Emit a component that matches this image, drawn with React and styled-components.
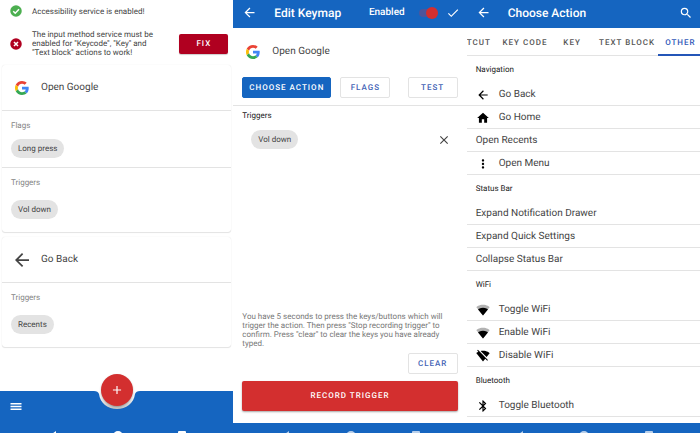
import React from "react";
import styled, { createGlobalStyle } from "styled-components";

const BLUE = "#1565c0";
const RED = "#d32f2f";

const GlobalStyle = createGlobalStyle`
  *, *::before, *::after { box-sizing: border-box; }
  body { margin: 0; background: #fff; color: #444; font-family: Roboto, "Liberation Sans", sans-serif; font-size: 10px; line-height: 12px; text-rendering: geometricPrecision; }
  button { font: inherit; color: inherit; border: 0; background: none; padding: 0; cursor: pointer; text-rendering: inherit; }
  h1, h2, p, ul { margin: 0; padding: 0; font: inherit; }
  ul { list-style: none; }
  svg { display: block; flex: none; }
`;

const Screens = styled.main`
  display: grid;
  grid-template-columns: repeat(3, minmax(0, 1fr));
  height: 100vh;
  overflow: hidden;
`;

const Screen = styled.section`
  display: flex;
  flex-direction: column;
  min-width: 0;
  min-height: 0;
  overflow: hidden;
`;

const Content = styled.div`
  flex: 1;
  min-height: 0;
  overflow: hidden;
  display: flex;
  flex-direction: column;
`;

/* Status notices */
const Notices = styled.div`
  display: flex;
  flex-direction: column;
  gap: 13px;
  padding: 5px 5px 0 10px;
`;

const Notice = styled.div`
  display: flex;
  align-items: center;
  gap: 10px;
`;

const NoticeText = styled.p`
  flex: 1;
  padding-right: 12px;
  font-size: 8px;
  line-height: 9px;
`;

const FixButton = styled.button`
  width: 49px;
  height: 20px;
  border-radius: 2px;
  background: #b00020;
  color: #fff;
  font-size: 8px;
  font-weight: 500;
  letter-spacing: 1px;
  box-shadow: 0 1px 1px rgba(0, 0, 0, 0.2);
`;

/* Keymap cards */
const Cards = styled.div`
  display: flex;
  flex-direction: column;
  gap: 5px;
  padding: 8px 2px 0;
`;

const Card = styled.article`
  border-radius: 3px;
  box-shadow: 0 0 1px rgba(0, 0, 0, 0.14), 0 1px 1px rgba(0, 0, 0, 0.1);
`;

const CardHead = styled.header`
  display: flex;
  align-items: center;
  gap: 12px;
  height: 45px;
  padding: 1px 13px 0;
`;

const CardSection = styled.div`
  display: flex;
  flex-direction: column;
  align-items: flex-start;
  gap: ${(p) => (p.$compact ? 8 : 12)}px;
  padding: 10px 9px ${(p) => (p.$compact ? 9 : 13)}px;
  border-top: 1px solid #e3e3e3;
`;

const Caption = styled.h2`
  font-size: 8px;
  line-height: 10px;
  color: ${(p) => (p.$strong ? "#222" : "#858585")};
`;

const Chip = styled.span`
  display: inline-flex;
  align-items: center;
  height: 19px;
  padding: 0 7px;
  border-radius: 10px;
  background: #e3e3e3;
  color: #444;
  font-size: 8px;
`;

/* Bottom bars */
const BottomBar = styled.footer`
  position: relative;
  display: flex;
  flex-direction: column;
  justify-content: space-between;
  height: 42px;
  background: ${BLUE};
  color: #fff;
`;

const MenuButton = styled.button`
  align-self: flex-start;
  padding: 9px 9px 0;
  color: #fff;
`;

const FabDock = styled.div`
  position: absolute;
  top: -17px;
  left: 0;
  right: 0;
  display: grid;
  justify-items: center;
  pointer-events: none;
  > * { grid-area: 1 / 1; }
`;

const Fab = styled.button`
  width: 32px;
  height: 32px;
  display: grid;
  place-items: center;
  border-radius: 50%;
  background: ${RED};
  color: #fff;
  pointer-events: auto;
  box-shadow: 0 1px 2px rgba(0, 0, 0, 0.3);
`;

const SystemBar = styled.div`
  display: flex;
  justify-content: space-between;
  align-items: flex-start;
  flex: none;
  height: ${(p) => (p.$inset ? 2 : 10)}px;
  padding: ${(p) => (p.$inset ? 0 : 8)}px 46px 0 48px;
  overflow: hidden;
  background: ${BLUE};
  color: ${(p) => (p.$inset ? "#fff" : "#b8cfea")};
`;

/* App bar */
const AppBar = styled.header`
  display: flex;
  align-items: center;
  flex: none;
  height: 28px;
  padding: 0 7px 3px 9px;
  background: ${BLUE};
  color: #fff;
`;

const IconButton = styled.button`
  display: grid;
  place-items: center;
  flex: none;
`;

const Title = styled.h1`
  flex: 1;
  padding-left: 17px;
  font-size: 12px;
  line-height: 14px;
  font-weight: 500;
  white-space: nowrap;
`;

const SwitchLabel = styled.label`
  display: flex;
  align-items: center;
  gap: 14px;
  margin-right: 8px;
  font-weight: 500;
`;

const Switch = styled.input`
  appearance: none;
  display: flex;
  align-items: center;
  justify-content: flex-end;
  width: 19px;
  height: 8px;
  margin: 0;
  border-radius: 4px;
  background: #4c559c;
  &::before {
    content: "";
    width: 12px;
    height: 12px;
    flex: none;
    border-radius: 50%;
    background: ${RED};
  }
`;

/* Keymap editor */
const ActionSummary = styled.div`
  display: flex;
  align-items: center;
  gap: 12px;
  height: 46px;
  padding: 1px 13px 0;
`;

const ButtonRow = styled.div`
  display: flex;
  padding: 3px 9px 7px;
  border-bottom: 1px solid #e3e3e3;
`;

const Button = styled.button`
  width: ${(p) => (p.$filled ? 89 : 50)}px;
  height: 21px;
  margin-left: ${(p) => (p.$end ? "auto" : p.$filled ? "0" : "9px")};
  border: 1px solid ${(p) => (p.$filled ? BLUE : "#e3e3e3")};
  border-radius: 2px;
  background: ${(p) => (p.$filled ? BLUE : "#fff")};
  color: ${(p) => (p.$filled ? "#fff" : "#3f62b5")};
  font-size: 8px;
  font-weight: 500;
  letter-spacing: 1px;
  white-space: nowrap;
`;

const TriggerBlock = styled.div`
  flex: 1;
  padding: 5px 9px;
`;

const TriggerRow = styled.div`
  display: flex;
  align-items: center;
  justify-content: space-between;
  padding: 9px 7px 0 9px;
`;

const RecordPanel = styled.div`
  display: flex;
  flex-direction: column;
  gap: 5px;
  padding: 0 9px 12px;
`;

const Hint = styled.p`
  padding-right: 8px;
  font-size: 8px;
  line-height: 9px;
  color: #777;
`;

const RecordButton = styled.button`
  height: 30px;
  margin-top: 2px;
  border-radius: 2px;
  background: ${RED};
  color: #fff;
  font-size: 8px;
  font-weight: 500;
  letter-spacing: 1px;
  box-shadow: 0 1px 2px rgba(0, 0, 0, 0.35);
`;

/* Action chooser */
const Tabs = styled.div`
  display: flex;
  justify-content: space-between;
  flex: none;
  height: 28px;
  border-bottom: 1px solid #e3e3e3;
`;

const Tab = styled.button`
  min-width: 41px;
  height: 28px;
  padding: 3px 6px 0 7px;
  border-bottom: 2px solid ${(p) => (p.$active ? "#2456b8" : "transparent")};
  color: ${(p) => (p.$active ? "#3158b8" : "#555")};
  font-size: 8px;
  font-weight: 500;
  letter-spacing: 1px;
  white-space: nowrap;
  &:first-child { min-width: 0; padding-left: 0; }
`;

const GroupTitle = styled.h2`
  height: 27px;
  padding: 9px 9px 0;
  font-size: 8px;
  line-height: 10px;
  color: #222;
`;

const ActionRow = styled.button`
  display: flex;
  align-items: center;
  gap: 9px;
  width: 100%;
  height: 23px;
  padding: 2px 9px 0;
  border-bottom: 1px solid #e3e3e3;
  text-align: left;
  svg { color: #000; }
`;

const PATHS = {
  back: "M20 11H7.83l5.59-5.59L12 4l-8 8 8 8 1.41-1.41L7.83 13H20v-2z",
  check: "M9 16.17L4.83 12l-1.42 1.41L9 19 21 7l-1.41-1.41z",
  close: "M19 6.41L17.59 5 12 10.59 6.41 5 5 6.41 10.59 12 5 17.59 6.41 19 12 13.41 17.59 19 19 17.59 13.41 12z",
  add: "M19 13h-6v6h-2v-6H5v-2h6V5h2v6h6v2z",
  search:
    "M15.5 14h-.79l-.28-.27A6.47 6.47 0 0 0 16 9.5 6.5 6.5 0 1 0 9.5 16c1.61 0 3.09-.59 4.23-1.57l.27.28v.79l5 4.99L20.49 19l-4.99-5zm-6 0C7.01 14 5 11.99 5 9.5S7.01 5 9.5 5 14 7.01 14 9.5 11.99 14 9.5 14z",
  home: "M10 20v-6h4v6h5v-8h3L12 3 2 12h3v8z",
  more: "M12 8c1.1 0 2-.9 2-2s-.9-2-2-2-2 .9-2 2 .9 2 2 2zm0 2c-1.1 0-2 .9-2 2s.9 2 2 2 2-.9 2-2-.9-2-2-2zm0 6c-1.1 0-2 .9-2 2s.9 2 2 2 2-.9 2-2-.9-2-2-2z",
  wifiOff:
    "M23.64 7c-.45-.34-4.93-4-11.64-4-1.5 0-2.89.19-4.15.48L18.18 13.8 23.64 7zm-6.6 8.22L3.27 1.44 2 2.72l2.05 2.06C1.91 5.76.59 6.82.36 7l11.63 14.49.01.01.01-.01 3.9-4.86 3.32 3.32 1.27-1.27-3.46-3.46z",
  bluetooth:
    "M17.71 7.71L12 2h-1v7.59L6.41 5 5 6.41 10.59 12 5 17.59 6.41 19 11 14.41V22h1l5.71-5.71-4.3-4.29 4.3-4.29zM13 5.83l1.88 1.88L13 9.59V5.83zm1.88 10.46L13 18.17v-3.76l1.88 1.88z",
};

const Icon = ({ name, size = 14, tight = false }) => (
  <svg width={size} height={size} viewBox={tight ? "4 4 16 16" : "0 0 24 24"} fill="currentColor" aria-hidden="true">
    {name === "wifi" ? (
      <>
        <path opacity=".3" d="M12.01 21.49L23.64 7c-.45-.34-4.93-4-11.64-4C5.28 3 .81 6.66.36 7l11.63 14.49.01.01.01-.01z" />
        <path d="M3.53 10.95l8.46 10.54.01.01.01-.01 8.46-10.54C20.04 10.62 16.81 8 12 8c-4.81 0-8.04 2.62-8.47 2.95z" />
      </>
    ) : (
      <path d={PATHS[name]} />
    )}
  </svg>
);

const GoogleLogo = () => (
  <svg width="14" height="14" viewBox="0 0 48 48" aria-hidden="true">
    <path fill="#EA4335" d="M24 9.5c3.54 0 6.71 1.22 9.21 3.6l6.85-6.85C35.9 2.38 30.47 0 24 0 14.62 0 6.51 5.38 2.56 13.22l7.98 6.19C12.43 13.72 17.74 9.5 24 9.5z" />
    <path fill="#4285F4" d="M46.98 24.55c0-1.57-.15-3.09-.38-4.55H24v9.02h12.94c-.58 2.96-2.26 5.48-4.78 7.18l7.73 6c4.51-4.18 7.09-10.36 7.09-17.65z" />
    <path fill="#FBBC05" d="M10.53 28.59c-.48-1.45-.76-2.99-.76-4.59s.27-3.14.76-4.59l-7.98-6.19C.92 16.46 0 20.12 0 24s.92 7.54 2.56 10.78l7.97-6.19z" />
    <path fill="#34A853" d="M24 48c6.48 0 11.93-2.13 15.89-5.81l-7.73-6c-2.15 1.45-4.92 2.3-8.16 2.3-6.26 0-11.57-4.22-13.47-9.91l-7.98 6.19C6.51 42.62 14.62 48 24 48z" />
  </svg>
);

const StatusIcon = ({ ok }) => (
  <svg width="12" height="12" viewBox="0 0 24 24" aria-hidden="true">
    <circle cx="12" cy="12" r="11.5" fill={ok ? "#4caf50" : "#b00020"} />
    <path d={ok ? "M6.5 12.5l4 4 7.5-8" : "M8 8l8 8M16 8l-8 8"} fill="none" stroke="#fff" strokeWidth="3" />
  </svg>
);

const MenuIcon = () => (
  <svg width="13" height="14" viewBox="0 0 13 14" fill="#fff" aria-hidden="true">
    <path d="M1.5 3h11v1.4h-11zM1.5 5.8h11v1.4h-11zM1.5 8.6h11v1.4h-11z" />
  </svg>
);

const Notch = () => (
  <svg width="46" height="37" viewBox="0 0 46 37" aria-hidden="true">
    <defs>
      <linearGradient id="notchShade" x1="0" y1="0" x2="0" y2="1">
        <stop offset="0" stopColor="#fff" />
        <stop offset="0.5" stopColor="#eee" />
        <stop offset="1" stopColor="#c4c4c4" />
      </linearGradient>
    </defs>
    <path d="M0 17Q4 17 5 20C6 29 14 35 23 35S40 29 41 20Q42 17 46 17Z" fill="url(#notchShade)" />
  </svg>
);

const SystemNav = ({ inset }) => (
  <SystemBar $inset={inset} aria-hidden="true">
    <svg width="10" height="10" viewBox="0 0 10 10" fill="currentColor"><path d="M8 0v10L1 5z" /></svg>
    <svg width="10" height="10" viewBox="0 0 10 10" fill="currentColor"><circle cx="5" cy="5" r="5" /></svg>
    <svg width="10" height="10" viewBox="0 0 10 10" fill="currentColor"><rect x="1" width="8" height="9" rx="1" /></svg>
  </SystemBar>
);

const GROUPS = [
  { title: "Navigation", rows: [["back", "Go Back"], ["home", "Go Home"], [null, "Open Recents"], ["more", "Open Menu"]] },
  { title: "Status Bar", rows: [[null, "Expand Notification Drawer"], [null, "Expand Quick Settings"], [null, "Collapse Status Bar"]] },
  { title: "WiFi", rows: [["wifi", "Toggle WiFi"], ["wifi", "Enable WiFi"], ["wifiOff", "Disable WiFi"]] },
  { title: "Bluetooth", rows: [["bluetooth", "Toggle Bluetooth"]] },
];

const KeymapList = () => (
  <Screen>
    <Content>
      <Notices>
        <Notice>
          <StatusIcon ok />
          <NoticeText>Accessibility service is enabled!</NoticeText>
        </Notice>
        <Notice>
          <StatusIcon />
          <NoticeText>The input method service must be enabled for "Keycode", "Key" and "Text block" actions to work!</NoticeText>
          <FixButton>FIX</FixButton>
        </Notice>
      </Notices>
      <Cards>
        <Card>
          <CardHead><GoogleLogo />Open Google</CardHead>
          <CardSection $compact><Caption>Flags</Caption><Chip>Long press</Chip></CardSection>
          <CardSection><Caption>Triggers</Caption><Chip>Vol down</Chip></CardSection>
        </Card>
        <Card>
          <CardHead><Icon name="back" tight />Go Back</CardHead>
          <CardSection><Caption>Triggers</Caption><Chip>Recents</Chip></CardSection>
        </Card>
      </Cards>
    </Content>
    <BottomBar>
      <MenuButton aria-label="Menu"><MenuIcon /></MenuButton>
      <SystemNav inset />
      <FabDock>
        <Notch />
        <Fab aria-label="New keymap"><Icon name="add" size={14} /></Fab>
      </FabDock>
    </BottomBar>
  </Screen>
);

const KeymapEditor = () => (
  <Screen>
    <AppBar>
      <IconButton aria-label="Back"><Icon name="back" size={15} /></IconButton>
      <Title>Edit Keymap</Title>
      <SwitchLabel>Enabled<Switch type="checkbox" role="switch" defaultChecked /></SwitchLabel>
      <IconButton aria-label="Save"><Icon name="check" /></IconButton>
    </AppBar>
    <Content>
      <ActionSummary><GoogleLogo />Open Google</ActionSummary>
      <ButtonRow>
        <Button $filled>CHOOSE ACTION</Button>
        <Button>FLAGS</Button>
        <Button $end>TEST</Button>
      </ButtonRow>
      <TriggerBlock>
        <Caption $strong>Triggers</Caption>
        <TriggerRow>
          <Chip>Vol down</Chip>
          <IconButton aria-label="Remove trigger"><Icon name="close" size={14} /></IconButton>
        </TriggerRow>
      </TriggerBlock>
      <RecordPanel>
        <Hint>
          You have 5 seconds to press the keys/buttons which will trigger the action. Then press "Stop recording trigger" to
          confirm. Press "clear" to clear the keys you have already typed.
        </Hint>
        <Button $end>CLEAR</Button>
        <RecordButton>RECORD TRIGGER</RecordButton>
      </RecordPanel>
    </Content>
    <SystemNav />
  </Screen>
);

const ActionChooser = () => (
  <Screen>
    <AppBar>
      <IconButton aria-label="Back"><Icon name="back" size={15} /></IconButton>
      <Title>Choose Action</Title>
      <IconButton aria-label="Search"><Icon name="search" /></IconButton>
    </AppBar>
    <Tabs role="tablist">
      {["TCUT", "KEY CODE", "KEY", "TEXT BLOCK", "OTHER"].map((label) => (
        <Tab key={label} role="tab" $active={label === "OTHER"} aria-selected={label === "OTHER"}>{label}</Tab>
      ))}
    </Tabs>
    <Content>
      <div>
        {GROUPS.map(({ title, rows }) => (
          <section key={title}>
            <GroupTitle>{title}</GroupTitle>
            <ul>
              {rows.map(([icon, label]) => (
                <li key={label}>
                  <ActionRow>{icon && <Icon name={icon} />}{label}</ActionRow>
                </li>
              ))}
            </ul>
          </section>
        ))}
        <ActionRow aria-label="Enable Bluetooth"><Icon name="bluetooth" /></ActionRow>
      </div>
    </Content>
    <SystemNav />
  </Screen>
);

export default function App() {
  return (
    <>
      <GlobalStyle />
      <Screens>
        <KeymapList />
        <KeymapEditor />
        <ActionChooser />
      </Screens>
    </>
  );
}
